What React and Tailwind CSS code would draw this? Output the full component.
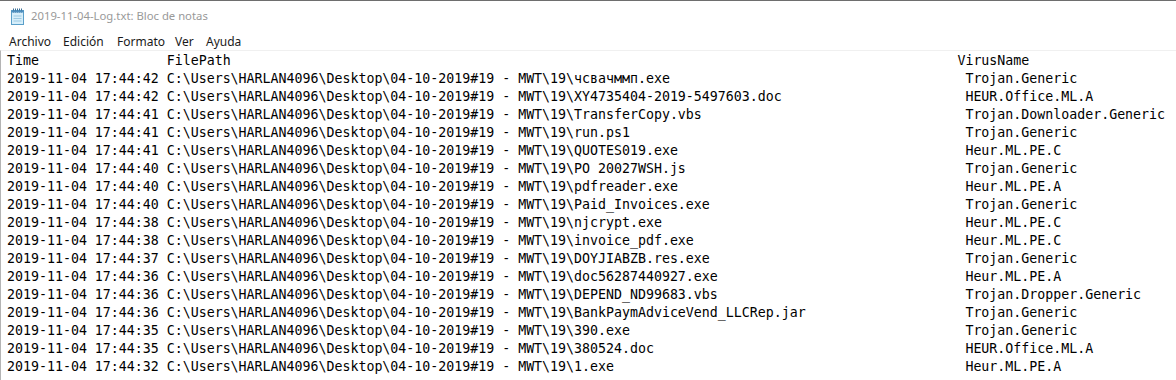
import React from "react";

const rows = [
  ["2019-11-04 17:44:42", "чсвачммп.exe", "Trojan.Generic"],
  ["2019-11-04 17:44:42", "XY4735404-2019-5497603.doc", "HEUR.Office.ML.A"],
  ["2019-11-04 17:44:41", "TransferCopy.vbs", "Trojan.Downloader.Generic"],
  ["2019-11-04 17:44:41", "run.ps1", "Trojan.Generic"],
  ["2019-11-04 17:44:41", "QUOTES019.exe", "Heur.ML.PE.C"],
  ["2019-11-04 17:44:40", "PO 20027WSH.js", "Trojan.Generic"],
  ["2019-11-04 17:44:40", "pdfreader.exe", "Heur.ML.PE.A"],
  ["2019-11-04 17:44:40", "Paid_Invoices.exe", "Trojan.Generic"],
  ["2019-11-04 17:44:38", "njcrypt.exe", "Heur.ML.PE.C"],
  ["2019-11-04 17:44:38", "invoice_pdf.exe", "Heur.ML.PE.C"],
  ["2019-11-04 17:44:37", "DOYJIABZB.res.exe", "Trojan.Generic"],
  ["2019-11-04 17:44:36", "doc56287440927.exe", "Heur.ML.PE.A"],
  ["2019-11-04 17:44:36", "DEPEND_ND99683.vbs", "Trojan.Dropper.Generic"],
  ["2019-11-04 17:44:36", "BankPaymAdviceVend_LLCRep.jar", "Trojan.Generic"],
  ["2019-11-04 17:44:35", "390.exe", "Trojan.Generic"],
  ["2019-11-04 17:44:35", "380524.doc", "HEUR.Office.ML.A"],
  ["2019-11-04 17:44:32", "1.exe", "Heur.ML.PE.A"],
];

const pad = (s, n) => s + " ".repeat(Math.max(1, n - s.length));

const header = pad("Time", 20) + pad("FilePath", 99) + "VirusName";
const lines = [
  header,
  ...rows.map(([t, f, v]) =>
    pad(t + " C:\\Users\\HARLAN4096\\Desktop\\04-10-2019#19 - MWT\\19\\" + f, 120) + v
  ),
];

function NotepadIcon() {
  return (
    <svg width="16" height="17" viewBox="0 0 16 17">
      <rect x="1.5" y="2.5" width="12" height="14" fill="#bfe3f5" stroke="#5a9fc9" />
      <rect x="2" y="4" width="11" height="12" fill="#d6eefa" />
      <line x1="3.5" y1="8" x2="11.5" y2="8" stroke="#9cc9e2" />
      <line x1="3.5" y1="10.5" x2="11.5" y2="10.5" stroke="#9cc9e2" />
      <line x1="3.5" y1="13" x2="11.5" y2="13" stroke="#9cc9e2" />
      {[3, 5, 7, 9, 11].map((x) => (
        <rect key={x} x={x} y="0.5" width="1" height="4" fill="#3a6f96" />
      ))}
      <rect x="1.5" y="2.5" width="12" height="2" fill="#4f8fbf" />
    </svg>
  );
}

export default function App() {
  return (
    <div className="w-[1176px] h-[380px] bg-white overflow-hidden flex flex-col border-t border-[#6e6e6e]">
      <div className="h-[30px] flex items-center pl-[10px] gap-[5px] shrink-0">
        <NotepadIcon />
        <span className="text-[11.3px] text-[#999999] font-['Noto_Sans',sans-serif] leading-none">
          2019-11-04-Log.txt: Bloc de notas
        </span>
      </div>
      <div className="h-[19px] flex items-center pl-[9px] pt-[2px] text-[12px] text-[#1a1a1a] font-['Noto_Sans',sans-serif] shrink-0">
        <span className="w-[54px]">Archivo</span>
        <span className="w-[54px]">Edición</span>
        <span className="w-[58px]">Formato</span>
        <span className="w-[31px]">Ver</span>
        <span>Ayuda</span>
      </div>
      <div className="flex-1 border-t border-[#f0f0f0] border-l border-l-[#b4b4b4]">
        <pre className="m-0 pl-[6px] pt-[1px] text-[13.28px] leading-[18px] text-black font-['DejaVu_Sans_Mono',monospace]">
          {lines.join("\n")}
        </pre>
      </div>
    </div>
  );
}
